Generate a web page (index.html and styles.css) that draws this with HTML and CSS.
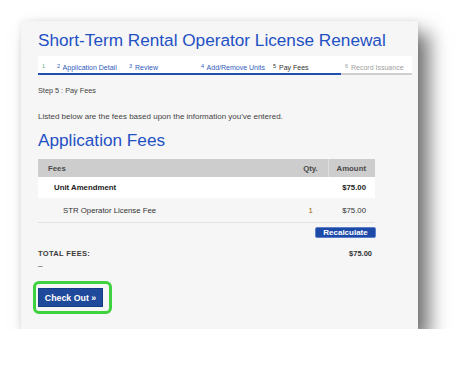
FILE: index.html
```html
<!DOCTYPE html>
<html lang="en">
<head>
    <meta charset="UTF-8">
    <meta name="viewport" content="width=device-width, initial-scale=1.0">
    <title>Short-Term Rental Operator License Renewal</title>
    <link rel="stylesheet" href="styles.css">
</head>
<body>
    <div class="panel">
        <h1 class="title">Short-Term Rental Operator License Renewal</h1>
        <ul class="steps">
            <li class="step done first"><span class="num">1</span></li>
            <li class="step done"><span class="num">2</span> Application Detail</li>
            <li class="step done"><span class="num">3</span> Review</li>
            <li class="step done"><span class="num">4</span> Add/Remove Units</li>
            <li class="step current"><span class="num">5</span> Pay Fees</li>
            <li class="step todo"><span class="num">6</span> Record Issuance</li>
        </ul>

        <p class="step-label">Step 5 : Pay Fees</p>
        <p class="intro">Listed below are the fees based upon the information you've entered.</p>

        <h2 class="section-title">Application Fees</h2>
        <table class="fees">
            <thead>
                <tr>
                    <th class="col-name">Fees</th>
                    <th class="col-qty">Qty.</th>
                    <th class="col-amount">Amount</th>
                </tr>
            </thead>
            <tbody>
                <tr class="group-row">
                    <td>Unit Amendment</td>
                    <td></td>
                    <td class="col-amount">$75.00</td>
                </tr>
                <tr class="item-row">
                    <td class="item-name">STR Operator License Fee</td>
                    <td class="col-qty qty">1</td>
                    <td class="col-amount">$75.00</td>
                </tr>
            </tbody>
        </table>

        <div class="recalc-row">
            <button class="recalc">Recalculate</button>
        </div>

        <div class="total-row">
            <span class="total-label">TOTAL FEES:</span>
            <span class="total-value">$75.00</span>
        </div>
        <div class="dash">–</div>

        <div class="highlight">
            <button class="checkout">Check Out »</button>
        </div>
    </div>
</body>
</html>
```

FILE: styles.css
```css
body {
    margin: 0;
    background: #fff;
    font-family: "Liberation Sans", Arial, sans-serif;
    color: #333;
}

.panel {
    margin: 21px 0 0 21px;
    width: 374px;
    height: 301px;
    padding: 7px 6px 0 17px;
    background: #f6f6f6;
    box-shadow: 11px 12px 18px rgba(0, 0, 0, 0.55), 0 0 6px rgba(0, 0, 0, 0.08);
}

.title {
    margin: 0;
    font-size: 17.2px;
    line-height: 24px;
    font-weight: normal;
    color: #1f50c4;
}

.steps {
    list-style: none;
    margin: 4px 0 0 0;
    padding: 0;
    display: flex;
    width: 374px;
    background: #fff;
}
.step {
    width: 72px;
    height: 19px;
    padding-left: 4px;
    box-sizing: border-box;
    font-size: 7px;
    line-height: 20px;
    white-space: nowrap;
    border-bottom: 2px solid #1f4fb0;
    color: #2f5bbd;
}
.step.first {
    width: 15px;
    color: #5aa88a;
}
.step.current { color: #333; }
.step.todo {
    width: 71px;
    color: #a0a0a0;
    border-bottom-color: #cfcfcf;
}
.num {
    font-size: 5.5px;
    vertical-align: 1.5px;
    margin-right: 1px;
}

.step-label {
    margin: 11px 0 0 0;
    font-size: 7.3px;
    line-height: 10px;
    color: #444;
}
.intro {
    margin: 16px 0 0 0;
    font-size: 8px;
    line-height: 10px;
    color: #444;
}

.section-title {
    margin: 7px 0 0 0;
    font-size: 17.2px;
    line-height: 22px;
    font-weight: normal;
    color: #1f50c4;
}

.fees {
    margin-top: 8px;
    width: 337px;
    border-collapse: collapse;
    font-size: 7.8px;
}
.fees th {
    height: 18px;
    padding: 0;
    background: #cdcdcd;
    font-weight: bold;
    color: #4a4a4a;
    text-align: left;
}
.fees th.col-name { padding-left: 10px; }
.fees .col-qty {
    width: 34px;
    text-align: center;
}
.fees .col-amount {
    width: 47px;
    text-align: right;
    padding-right: 9px;
    box-sizing: border-box;
}
.fees th.col-amount { border-left: 1px solid #dedede; }
.fees td { padding: 0; }
.group-row td {
    height: 21px;
    background: #fff;
    font-weight: bold;
    color: #222;
}
.group-row td:first-child { padding-left: 16px; }
.item-row td {
    height: 24px;
    border-bottom: 1px solid #e2e2e2;
    color: #333;
}
.item-row .item-name { padding-left: 25px; }
.item-row .qty { color: #9a6a10; }

.recalc-row {
    display: flex;
    justify-content: flex-end;
    width: 338px;
    margin-top: 4px;
}
.recalc {
    width: 61px;
    height: 11px;
    padding: 0;
    border: 1px solid #5b7fc8;
    border-radius: 2px;
    background: #1d4aa8;
    color: #fff;
    font-family: "Liberation Sans", Arial, sans-serif;
    font-size: 8px;
    font-weight: bold;
    line-height: 9px;
}

.total-row {
    display: flex;
    justify-content: space-between;
    width: 334px;
    margin-top: 11px;
    font-size: 7.5px;
    line-height: 10px;
    font-weight: bold;
}
.total-label {
    letter-spacing: 0.35px;
    color: #3a3a3a;
}
.total-value { color: #333; }
.dash {
    margin-top: 2px;
    font-size: 8px;
    line-height: 10px;
}

.highlight {
    display: inline-block;
    margin: 10px 0 0 -5px;
    padding: 4px 6px 4px 2px;
    border: 3px solid #3fd23f;
    border-radius: 6px;
}
.checkout {
    display: block;
    width: 65px;
    height: 19px;
    padding: 0;
    border: 1px solid #173d86;
    background: #1f4a9c;
    color: #fff;
    font-family: "Liberation Sans", Arial, sans-serif;
    font-size: 8.8px;
    font-weight: bold;
}
```
